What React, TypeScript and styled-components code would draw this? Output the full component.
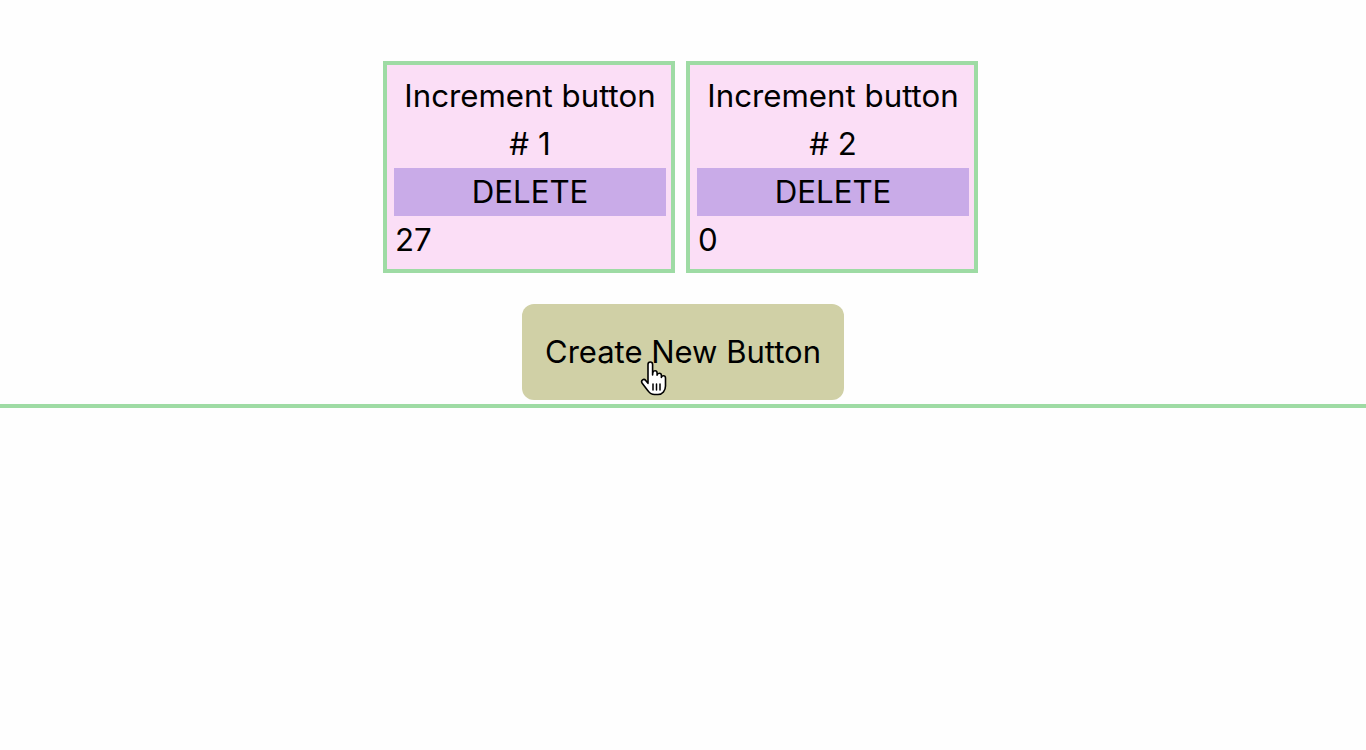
import React from "react";
import styled, { createGlobalStyle } from "styled-components";

const GlobalStyle = createGlobalStyle`
  html, body {
    margin: 0;
    padding: 0;
    background: #fefefe;
    font-family: Inter, "Liberation Sans", Arial, sans-serif;
    color: #000;
  }
`;

const Board = styled.div`
  position: relative;
  display: flex;
  flex-direction: column;
  align-items: center;
  padding: 61px 0 4px;
  border-bottom: 4px solid #9edba4;
`;

const CardRow = styled.div`
  display: flex;
  gap: 11px;
  margin-right: 5px;
`;

const Card = styled.div`
  width: 272px;
  padding: 7px 5px 5px 7px;
  border: 4px solid #9edba4;
  background: #fbdef6;
  font-size: 31.25px;
  line-height: 48px;
`;

const Title = styled.div`
  text-align: center;
  padding: 0 6px;
`;

const DeleteButton = styled.button`
  display: block;
  width: 100%;
  height: 48px;
  margin: 0;
  padding: 0;
  border: none;
  background: #c9abe8;
  font: inherit;
  line-height: 48px;
  color: #000;
  text-align: center;
  cursor: pointer;
`;

const Count = styled.div`
  text-align: left;
  padding-left: 1px;
`;

const CreateButton = styled.button`
  position: relative;
  margin-top: 31px;
  padding: 24px 23px;
  border: none;
  border-radius: 12px;
  background: #d0d0a6;
  font-family: Inter, "Liberation Sans", Arial, sans-serif;
  font-size: 31px;
  line-height: 48px;
  color: #000;
  cursor: pointer;
`;

const Cursor = styled.svg`
  position: absolute;
  left: 118px;
  top: 57px;
  width: 28px;
  height: 36px;
  pointer-events: none;
`;

const HandCursor = () => (
  <Cursor viewBox="0 0 28 36">
    <path
      d="M8 3.5c0-1.4 1-2.5 2.3-2.5s2.3 1.1 2.3 2.5V14l0.2-2.2c0.2-1.2 1.1-2 2.2-2s2.1 0.9 2.1 2.1v2.3c0.2-1.1 1.1-1.9 2.2-1.9s2.1 0.9 2.1 2.1v2c0.2-1 1-1.7 2-1.7 1.2 0 2.1 1 2.1 2.2V25c0 4.5-3 8.5-7.5 8.5h-3.5c-2.7 0-4.8-1.3-6.4-3.6L2.2 22.2c-0.8-1.2-0.6-2.6 0.4-3.3 1-0.7 2.3-0.4 3.1 0.5L8 22.3V3.5z"
      fill="#fff"
      stroke="#000"
      strokeWidth="1.6"
      strokeLinejoin="round"
    />
    <path d="M13 23v6M16.5 23v6M20 23v6" stroke="#000" strokeWidth="1.5" strokeLinecap="round" />
  </Cursor>
);

type CounterProps = { index: number; count: number };

const Counter = ({ index, count }: CounterProps) => (
  <Card>
    <Title>Increment button # {index}</Title>
    <DeleteButton>DELETE</DeleteButton>
    <Count>{count}</Count>
  </Card>
);

export default function App() {
  const counters = [
    { index: 1, count: 27 },
    { index: 2, count: 0 },
  ];
  return (
    <>
      <GlobalStyle />
      <Board>
        <CardRow>
          {counters.map((c) => (
            <Counter key={c.index} index={c.index} count={c.count} />
          ))}
        </CardRow>
        <CreateButton>
          Create New Button
          <HandCursor />
        </CreateButton>
      </Board>
    </>
  );
}
